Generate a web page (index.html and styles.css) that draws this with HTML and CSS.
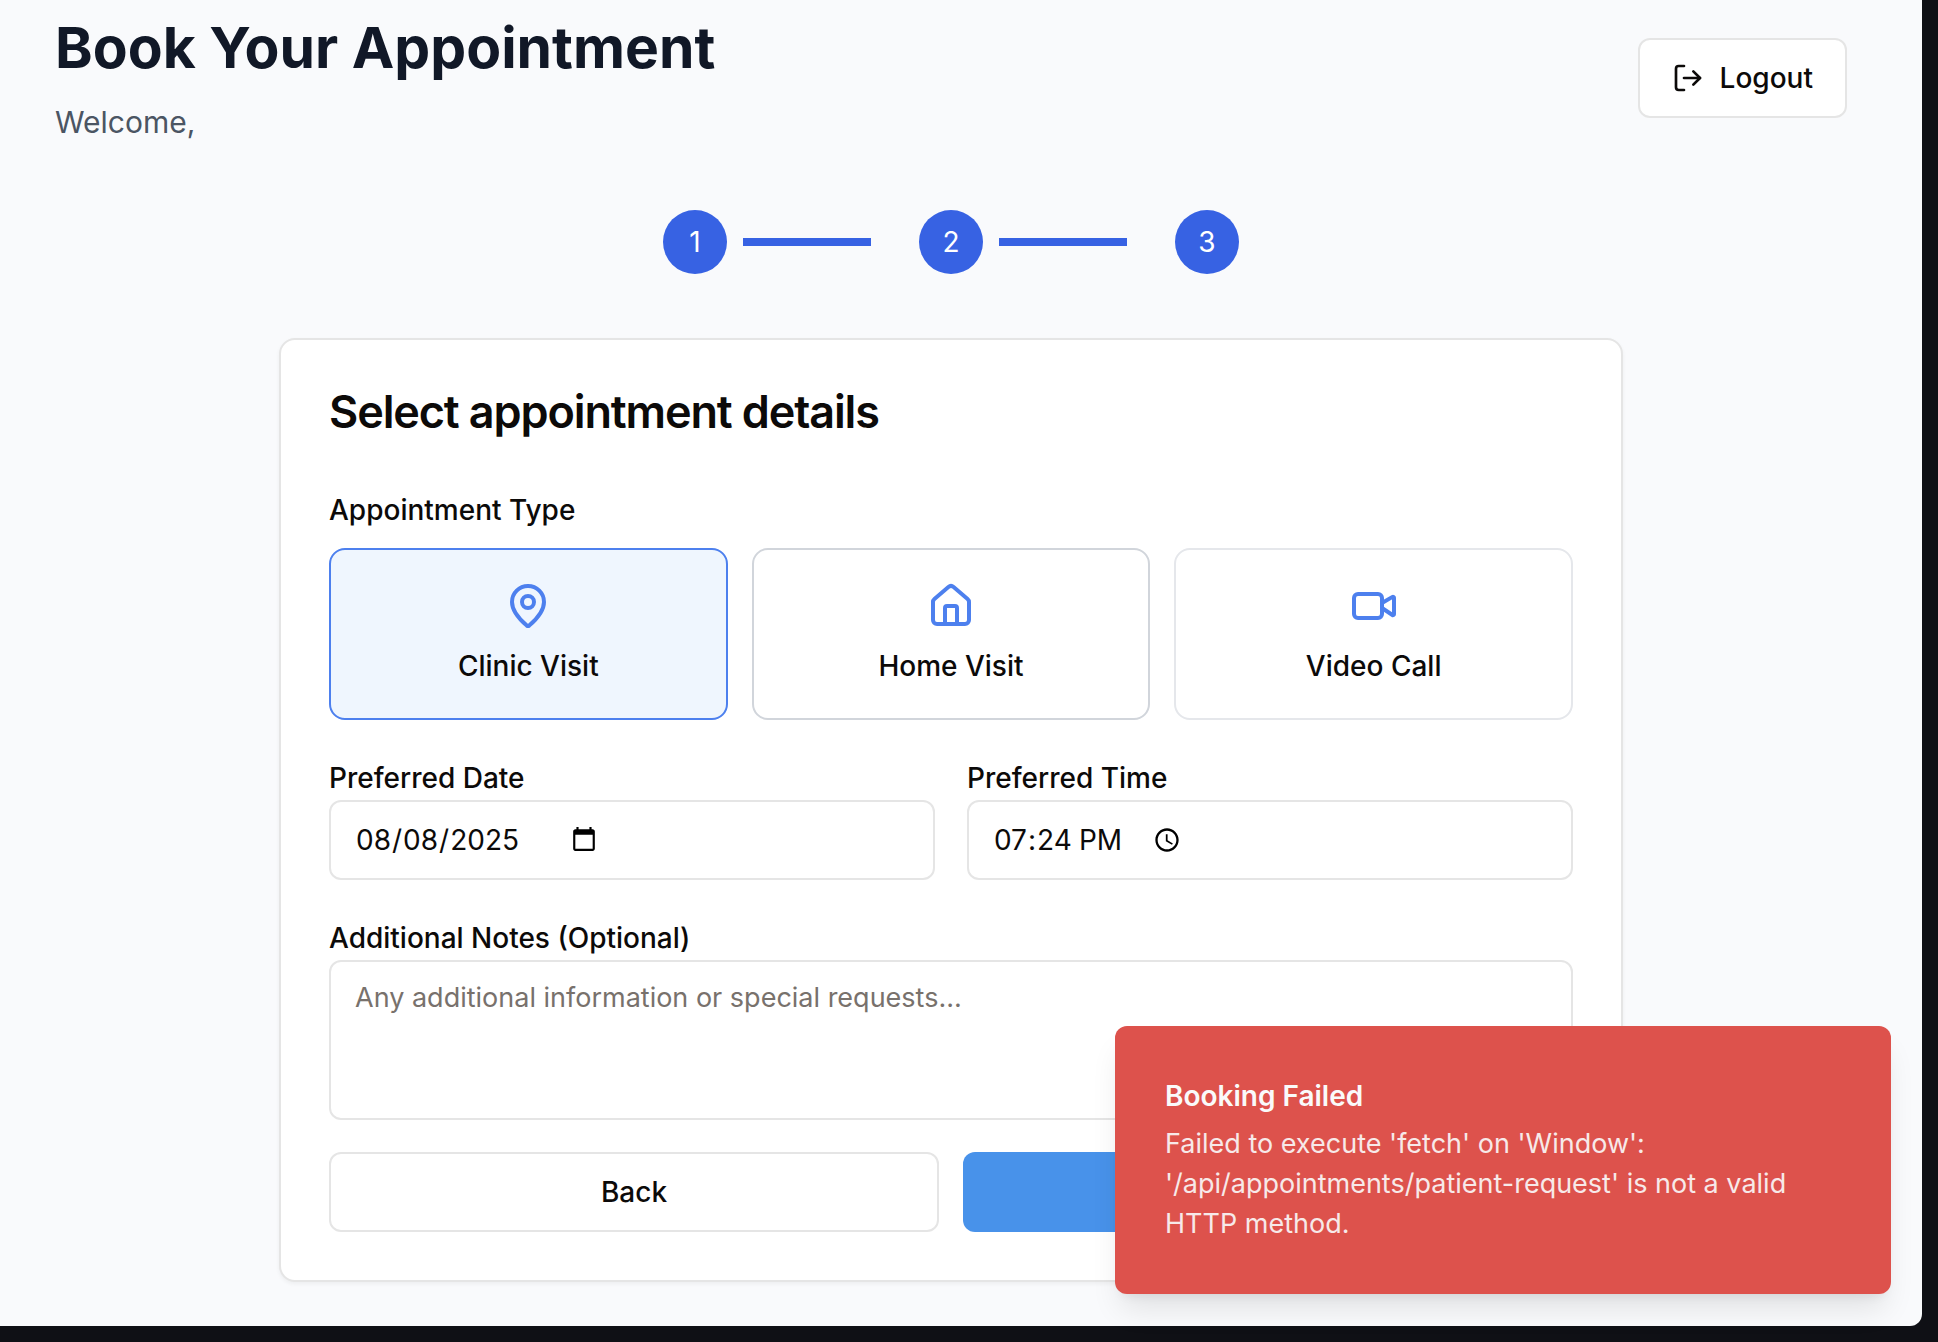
FILE: index.html
```html
<!DOCTYPE html>
<html lang="en-US">
<head>
<meta charset="utf-8">
<title>Book Your Appointment</title>
<meta name="viewport" content="width=device-width, initial-scale=1">
<link rel="stylesheet" href="styles.css">
</head>
<body>
<div class="app">
  <header class="header">
    <div>
      <h1 class="title">Book Your Appointment</h1>
      <p class="welcome">Welcome,</p>
    </div>
    <button type="button" class="button">
      <svg class="icon-small" viewBox="0 0 24 24" aria-hidden="true"><path d="M9 21H5a2 2 0 0 1-2-2V5a2 2 0 0 1 2-2h4"/><path d="m16 17 5-5-5-5"/><path d="M21 12H9"/></svg>
      Logout
    </button>
  </header>

  <ol class="steps">
    <li class="step"><span class="step-number">1</span><span class="step-line"></span></li>
    <li class="step"><span class="step-number">2</span><span class="step-line"></span></li>
    <li class="step"><span class="step-number">3</span></li>
  </ol>

  <main class="card">
    <h2 class="card-title">Select appointment details</h2>
    <form class="form">
      <fieldset class="types">
        <legend class="label types-label">Appointment Type</legend>
        <div class="type-grid">
          <label class="type">
            <input class="type-radio" type="radio" name="type" value="clinic" checked>
            <svg class="icon" viewBox="0 0 24 24" aria-hidden="true"><path d="M20 10c0 4.993-5.539 10.193-7.399 11.799a1 1 0 0 1-1.202 0C9.539 20.193 4 14.993 4 10a8 8 0 0 1 16 0"/><circle cx="12" cy="10" r="3"/></svg>
            <span>Clinic Visit</span>
          </label>
          <label class="type type-hover">
            <input class="type-radio" type="radio" name="type" value="home">
            <svg class="icon" viewBox="0 0 24 24" aria-hidden="true"><path d="M15 21v-8a1 1 0 0 0-1-1h-4a1 1 0 0 0-1 1v8"/><path d="M3 10a2 2 0 0 1 .709-1.528l7-5.999a2 2 0 0 1 2.582 0l7 5.999A2 2 0 0 1 21 10v9a2 2 0 0 1-2 2H5a2 2 0 0 1-2-2z"/></svg>
            <span>Home Visit</span>
          </label>
          <label class="type">
            <input class="type-radio" type="radio" name="type" value="video">
            <svg class="icon" viewBox="0 0 24 24" aria-hidden="true"><path d="m16 13 5.223 3.482a.5.5 0 0 0 .777-.416V7.87a.5.5 0 0 0-.752-.432L16 10.5"/><rect x="2" y="6" width="14" height="12" rx="2"/></svg>
            <span>Video Call</span>
          </label>
        </div>
      </fieldset>

      <div class="row">
        <div class="field">
          <label class="label" for="date">Preferred Date</label>
          <input class="input date" id="date" type="date" value="2025-08-08">
        </div>
        <div class="field">
          <label class="label" for="time">Preferred Time</label>
          <input class="input time" id="time" type="time" value="19:24">
        </div>
      </div>

      <div class="field">
        <label class="label" for="notes">Additional Notes (Optional)</label>
        <textarea class="input notes" id="notes" placeholder="Any additional information or special requests..."></textarea>
      </div>

      <div class="actions">
        <button type="button" class="button">Back</button>
        <button type="submit" class="button submit" aria-label="Book Appointment"></button>
      </div>
    </form>
  </main>

  <div class="toast" role="alert">
    <p class="toast-title">Booking Failed</p>
    <p class="toast-text">Failed to execute 'fetch' on 'Window': '/api/appointments/patient-request' is not a valid HTTP method.</p>
  </div>
</div>
</body>
</html>
```

FILE: styles.css
```css
*, *::before, *::after {
  box-sizing: border-box;
}

html {
  background: #0f1015;
}

body {
  margin: 0;
  padding: 0 16px 16px 0;
  font-family: Inter, "Liberation Sans", sans-serif;
  font-size: 28px;
  line-height: 40px;
  color: #0c0a09;
}

h1, h2, p, ol, fieldset {
  margin: 0;
  padding: 0;
}

.app {
  position: relative;
  min-height: calc(100vh - 16px);
  padding: 10px 75px 44px 55px;
  background: #f9fafc;
  border-bottom-right-radius: 12px;
}

.header {
  display: flex;
  align-items: center;
  justify-content: space-between;
}

.title {
  font-size: 57px;
  line-height: 76px;
  font-weight: 700;
  color: #111827;
}

.welcome {
  margin-top: 12px;
  font-size: 30px;
  line-height: 48px;
  color: #4b5563;
}

.button {
  display: flex;
  align-items: center;
  justify-content: center;
  gap: 16px;
  height: 80px;
  padding: 0 32px;
  border: 2px solid #e5e5e5;
  border-radius: 12px;
  background: #fff;
  font: inherit;
  font-weight: 500;
  color: inherit;
}

.icon,
.icon-small {
  flex: none;
  fill: none;
  stroke: currentColor;
  stroke-width: 2;
  stroke-linecap: round;
  stroke-linejoin: round;
}

.icon {
  width: 48px;
  height: 48px;
  color: #4d80ee;
}

.icon-small {
  width: 32px;
  height: 32px;
}

.steps {
  display: flex;
  justify-content: center;
  gap: 48px;
  margin: 64px 0;
  list-style: none;
}

.step {
  display: flex;
  align-items: center;
  gap: 16px;
}

.step-number {
  display: flex;
  align-items: center;
  justify-content: center;
  width: 64px;
  height: 64px;
  border-radius: 50%;
  background: #3762e3;
  color: #fff;
}

.step-line {
  width: 128px;
  height: 8px;
  background: #3762e3;
}

.card {
  max-width: 1344px;
  margin: 0 auto;
  padding: 48px;
  border: 2px solid #e5e5e5;
  border-radius: 16px;
  background: #fff;
  box-shadow: 0 2px 4px rgba(0, 0, 0, 0.05);
}

.card-title {
  margin-bottom: 48px;
  font-size: 45px;
  line-height: 48px;
  font-weight: 600;
  letter-spacing: -0.025em;
}

.form {
  display: flex;
  flex-direction: column;
  gap: 32px;
}

.types {
  min-width: 0;
  border: 0;
}

.label {
  display: block;
  padding: 4px 0 0;
  line-height: 44px;
  font-weight: 500;
}

.types-label {
  margin-bottom: 16px;
}

.type-grid {
  display: grid;
  grid-template-columns: repeat(3, 1fr);
  gap: 24px;
}

.type {
  display: flex;
  flex-direction: column;
  align-items: center;
  gap: 16px;
  padding: 32px;
  border: 2px solid #e5e7eb;
  border-radius: 16px;
  font-weight: 500;
}

.type-hover {
  border-color: #d1d5db;
}

.type:has(:checked) {
  border-color: #4d80ee;
  background: #eff6fe;
}

.type-radio {
  position: absolute;
  opacity: 0;
}

.row {
  display: grid;
  grid-template-columns: 1fr 1fr;
  gap: 32px;
}

.input {
  display: flex;
  width: 100%;
  height: 80px;
  padding: 16px 24px;
  border: 2px solid #e5e5e5;
  border-radius: 12px;
  background: #fff;
  font: inherit;
  color: inherit;
}

.input::-webkit-datetime-edit {
  flex: none;
}

.input::-webkit-calendar-picker-indicator {
  width: 28px;
  height: 28px;
  padding: 0;
}

.date::-webkit-calendar-picker-indicator {
  margin-left: 4px;
}

.time::-webkit-calendar-picker-indicator {
  margin-left: 28px;
}

.notes {
  height: 160px;
  font-size: 27px;
  resize: none;
}

.notes::placeholder {
  color: #78716c;
}

.actions {
  display: grid;
  grid-template-columns: 1fr 1fr;
  gap: 24px;
}

.submit {
  border: 0;
  background: #4892ea;
}

.toast {
  position: absolute;
  right: 31px;
  bottom: 32px;
  width: 776px;
  padding: 50px;
  border-radius: 12px;
  background: #dd524c;
  color: #fafafa;
  box-shadow: 0 20px 30px -6px rgba(0, 0, 0, 0.1), 0 8px 12px -8px rgba(0, 0, 0, 0.1);
}

.toast-title {
  margin-bottom: 8px;
  font-weight: 600;
}

.toast-text {
  font-size: 27px;
  opacity: 0.9;
}
```
